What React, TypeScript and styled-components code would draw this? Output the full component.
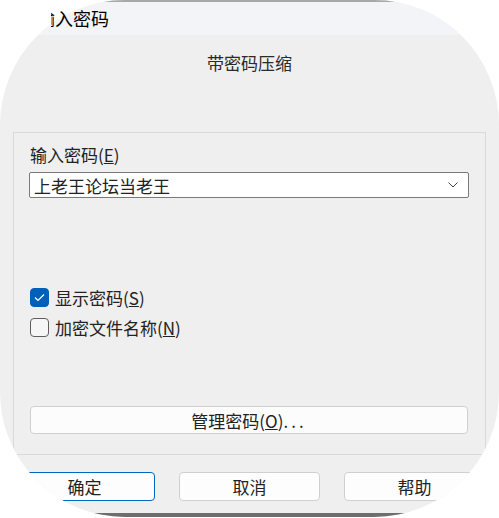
import React from "react";
import styled, { createGlobalStyle } from "styled-components";

const Global = createGlobalStyle`
  html, body { margin: 0; padding: 0; background: #ffffff; }
  body { font-family: "Noto Sans CJK SC", "Noto Sans", sans-serif; color: #1e1e1e; }
`;

const Stage = styled.div`
  position: relative;
  width: 499px;
  height: 518px;
  background: #ffffff;
  overflow: hidden;
`;

const Frame = styled.div`
  box-sizing: border-box;
  width: 499px;
  height: 517px;
  border-radius: 125px;
  overflow: hidden;
  background: #efefef;
  display: flex;
  flex-direction: column;
`;

const TitleBar = styled.div`
  height: 33px;
  flex: none;
  background: #f3f4f7;
  border-top: 2px solid #a8a8a8;
`;

const TitleClip = styled.div`
  position: absolute;
  top: 7px;
  left: 51px;
  width: 80px;
  overflow: hidden;
  white-space: nowrap;
  font-size: 18px;
  line-height: 22px;
  color: #000;
`;

const TitleText = styled.span`
  display: inline-block;
  margin-left: -14px;
`;

const Body = styled.div`
  flex: 1;
  display: flex;
  flex-direction: column;
  padding: 0 13px;
`;

const Heading = styled.div`
  margin-top: 16px;
  text-align: center;
  font-size: 17px;
  line-height: 24px;
  color: #2a2a2a;
`;

const Group = styled.div`
  margin-top: 57px;
  border: 1px solid #d9d9d9;
  padding: 11px 16px 20px 16px;
  display: flex;
  flex-direction: column;
`;

const FieldLabel = styled.div`
  height: 22px;
  font-size: 17px;
  line-height: 22px;
  color: #222;
`;

const Combo = styled.div`
  box-sizing: border-box;
  margin: 6px 0 0 -1px;
  height: 26px;
  border: 1px solid #7a7a7a;
  border-radius: 2px;
  background: #fff;
  padding: 0 10px 0 4px;
  display: flex;
  align-items: center;
  justify-content: space-between;
  font-size: 17px;
  color: #222;
`;

const Checks = styled.div`
  margin-top: 90px;
  display: flex;
  flex-direction: column;
  gap: 11px;
`;

const CheckRow = styled.div`
  height: 19px;
  display: flex;
  align-items: center;
  gap: 6px;
  font-size: 17px;
  color: #222;
`;

const Box = styled.div<{ $checked?: boolean }>`
  box-sizing: border-box;
  width: 19px;
  height: 19px;
  border-radius: 4px;
  flex: none;
  display: flex;
  align-items: center;
  justify-content: center;
  background: ${(p) => (p.$checked ? "#005fb8" : "#f6f6f6")};
  border: 1px solid ${(p) => (p.$checked ? "#005fb8" : "#5e5e5e")};
`;

const ManageButton = styled.div`
  box-sizing: border-box;
  margin: 69px 1px 0 0;
  height: 28px;
  border: 1px solid #cfcfcf;
  border-radius: 4px;
  background: #fcfcfc;
  display: flex;
  align-items: center;
  justify-content: center;
  font-size: 17px;
  color: #222;
`;

const Dots = styled.span`
  letter-spacing: 3px;
`;

const ButtonRow = styled.div`
  margin: 17px 0 0 1px;
  display: flex;
  gap: 24px;
`;

const DialogButton = styled.div<{ $default?: boolean }>`
  box-sizing: border-box;
  width: 141px;
  height: 29px;
  border-radius: 4px;
  background: #fdfdfd;
  border: 1px solid ${(p) => (p.$default ? "#0067c0" : "#d0d0d0")};
  display: flex;
  align-items: center;
  justify-content: center;
  font-size: 17px;
  color: #222;
`;

const BottomEdge = styled.div`
  margin-top: auto;
  height: 4px;
  flex: none;
  background: #6e6e6e;
`;

export default function App() {
  return (
    <Stage>
      <Global />
      <Frame>
        <TitleBar />
        <Body>
          <Heading>带密码压缩</Heading>
          <Group>
            <FieldLabel>
              输入密码(<u>E</u>)
            </FieldLabel>
            <Combo>
              <span>上老王论坛当老王</span>
              <svg width="10" height="6" viewBox="0 0 10 6">
                <polyline points="0.5,0.5 5,5 9.5,0.5" fill="none" stroke="#444" strokeWidth="1" />
              </svg>
            </Combo>
            <Checks>
              <CheckRow>
                <Box $checked>
                  <svg width="11" height="9" viewBox="0 0 11 9">
                    <polyline points="1,4.5 4,7.5 10,1.5" fill="none" stroke="#fff" strokeWidth="1.2" />
                  </svg>
                </Box>
                <span>
                  显示密码(<u>S</u>)
                </span>
              </CheckRow>
              <CheckRow>
                <Box />
                <span>
                  加密文件名称(<u>N</u>)
                </span>
              </CheckRow>
            </Checks>
            <ManageButton>
              管理密码(<u>O</u>)<Dots>...</Dots>
            </ManageButton>
          </Group>
          <ButtonRow>
            <DialogButton $default>确定</DialogButton>
            <DialogButton>取消</DialogButton>
            <DialogButton>帮助</DialogButton>
          </ButtonRow>
        </Body>
        <BottomEdge />
      </Frame>
      <TitleClip>
        <TitleText>输入密码</TitleText>
      </TitleClip>
    </Stage>
  );
}
